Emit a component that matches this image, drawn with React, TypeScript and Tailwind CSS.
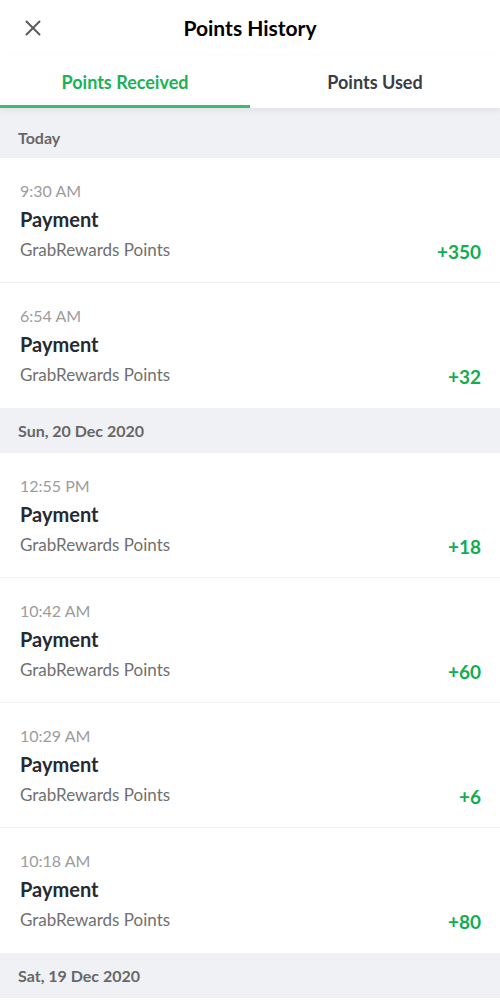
import { X } from "lucide-react";

type Entry = { time: string; points: number };
type Group = { label: string; entries: Entry[] };

const groups: Group[] = [
  {
    label: "Today",
    entries: [
      { time: "9:30 AM", points: 350 },
      { time: "6:54 AM", points: 32 },
    ],
  },
  {
    label: "Sun, 20 Dec 2020",
    entries: [
      { time: "12:55 PM", points: 18 },
      { time: "10:42 AM", points: 60 },
      { time: "10:29 AM", points: 6 },
      { time: "10:18 AM", points: 80 },
    ],
  },
  { label: "Sat, 19 Dec 2020", entries: [] },
];

function Row({ entry, last }: { entry: Entry; last: boolean }) {
  return (
    <div
      className={
        "h-[125px] bg-white pl-5 pr-[19px] pt-[23px] flex flex-col " +
        (last ? "" : "border-b border-[#eeeff1]")
      }
    >
      <div className="text-[16px] leading-[20px] text-[#9c9c9c]">{entry.time}</div>
      <div className="mt-[6px] text-[20px] leading-[24px] font-bold text-[#262a31]">
        Payment
      </div>
      <div className="mt-[8px] flex items-end justify-between">
        <span className="text-[17px] leading-[22px] text-[#707070]">
          GrabRewards Points
        </span>
        <span className="text-[19px] leading-[22px] font-bold text-[#11ad52] translate-y-[2px]">
          +{entry.points}
        </span>
      </div>
    </div>
  );
}

export default function App() {
  return (
    <div
      className="w-[500px] min-h-[1005px] bg-white"
      style={{ fontFamily: "Lato, 'Open Sans', sans-serif" }}
    >
      {/* Header */}
      <header className="relative h-14 flex items-center justify-center">
        <button className="absolute left-[20px] top-[15px] text-[#5a5a5a]">
          <X size={26} strokeWidth={1.8} />
        </button>
        <h1 className="text-[21px] font-bold text-black">Points History</h1>
      </header>

      {/* Tabs */}
      <div className="relative z-10 grid grid-cols-2 h-[52px] bg-white shadow-[0_3px_6px_rgba(0,0,0,0.06)]">
        <div className="flex items-center justify-center border-b-[3px] border-[#3dba73] pt-[3px]">
          <span className="text-[18px] font-bold text-[#1db156]">Points Received</span>
        </div>
        <div className="flex items-center justify-center border-b-[3px] border-transparent pt-[3px]">
          <span className="text-[18px] font-bold text-[#3a3d44]">Points Used</span>
        </div>
      </div>

      {groups.map((g, gi) => (
        <section key={g.label}>
          <div
            className={
              "bg-[#f0f1f4] flex items-center px-[18px] " +
              (gi === 0 ? "h-[50px] pt-[10px]" : "h-[45px]")
            }
          >
            <span className="text-[16px] font-bold text-[#676767]">{g.label}</span>
          </div>
          {g.entries.map((e, i) => (
            <Row key={e.time} entry={e} last={i === g.entries.length - 1} />
          ))}
        </section>
      ))}
    </div>
  );
}
